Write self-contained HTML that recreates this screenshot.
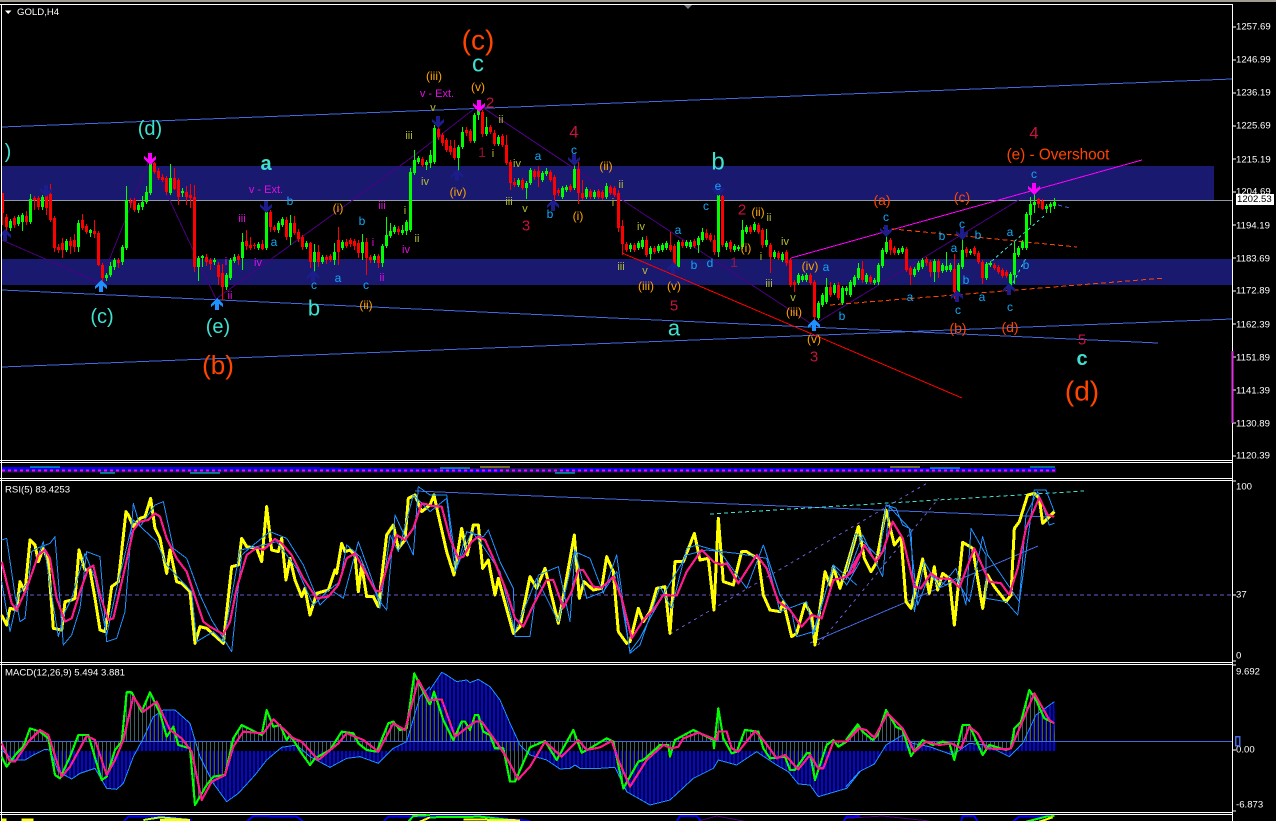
<!DOCTYPE html>
<html><head><meta charset="utf-8"><title>GOLD,H4</title>
<style>
html,body{margin:0;padding:0;background:#000;width:1276px;height:821px;overflow:hidden}
svg{display:block;position:absolute;left:0;top:0}
text{font-family:"Liberation Sans",Arial,sans-serif;dominant-baseline:central}
.m text{text-anchor:middle}
.ax text{fill:#fff;font-size:9.600px}
polyline{fill:none;stroke-linejoin:round}
.y{stroke:#ff0;stroke-width:9}
.p{stroke:#ff1a8c;stroke-width:6.5}
.b{stroke:#1e90ff;stroke-width:3}
.g{stroke:#0f0;stroke-width:6.5}
</style></head><body>
<svg width="1276" height="821" viewBox="0 0 1276 821" xmlns="http://www.w3.org/2000/svg">
<defs>
<pattern id="pb" width="4" height="10" patternUnits="userSpaceOnUse"><rect x="1" width="2" height="10" fill="#0000ff"/></pattern>
<pattern id="pg" width="4" height="10" patternUnits="userSpaceOnUse"><rect x="2" width="1" height="10" fill="#3f5f61"/></pattern>
<path id="dn" d="M-2-12H2V-6L6-9V-6L0 0-6-6V-9L-2-6Z"/>
<path id="up" d="M-2 12H2V6L6 9V6L0 0-6 6V9L-2 6Z"/>
<clipPath id="cb">
<polygon transform="scale(.33333) translate(0,1980)" points="5,273 5,270 40,300 75,300 100,285 135,268 150,270 175,335 215,357 240,340 285,325 320,385 350,388 370,370 400,290 430,235 460,170 490,150 525,150 570,190 600,290 640,370 680,425 715,400 765,345 800,300 845,262 890,255 930,290 990,322 1040,295 1080,290 1135,310 1180,265 1220,245 1260,110 1290,80 1290,273"/>
<polygon transform="translate(430,660) scale(.33333)" points="0,273 0,90 35,37 50,45 80,65 110,60 120,68 145,58 180,80 210,120 240,190 270,255 300,285 350,300 390,327 420,325 435,315 450,325 510,325 555,322 590,395 660,435 720,420 790,355 850,325 865,300 920,315 980,275 1040,315 1075,335 1105,372 1140,375 1165,410 1250,385 1290,335 1290,273"/>
<polygon transform="translate(846,660) scale(.33333)" points="0,273 0,380 40,335 85,312 120,255 170,225 200,250 250,260 320,285 370,250 420,255 490,290 530,250 570,165 625,125 628,273"/>
</clipPath>
<clipPath id="cg">
<polygon transform="scale(.33333) translate(0,1980)" points="5,244 5,290 20,320 50,280 70,260 90,205 120,215 145,235 165,345 180,355 210,290 235,225 265,225 290,310 305,360 320,350 345,270 365,245 380,97 395,97 425,155 450,97 480,160 500,230 520,200 535,255 570,265 585,435 620,375 640,350 675,345 700,235 725,195 745,205 785,225 800,150 820,200 840,195 860,240 870,225 905,280 930,315 945,295 990,270 1025,215 1060,220 1075,250 1100,270 1130,275 1165,190 1180,185 1200,210 1220,205 1243,40 1260,75 1290,135 1290,244"/>
<polygon transform="translate(430,660) scale(.33333)" points="0,244 0,135 12,95 40,180 70,240 95,185 105,185 120,210 135,165 145,165 160,215 180,225 195,265 220,265 240,365 255,365 300,262 345,243 380,300 430,210 455,278 480,265 530,235 550,245 580,385 625,305 640,300 690,255 715,255 720,290 735,240 790,210 850,240 852,265 865,145 880,235 905,280 920,275 945,210 985,215 1000,265 1020,295 1065,290 1080,330 1095,330 1130,280 1140,280 1155,360 1190,255 1210,240 1225,260 1250,245 1285,195 1290,244"/>
<polygon transform="translate(846,660) scale(.33333)" points="0,244 0,240 35,193 50,215 80,240 95,225 120,150 150,200 170,210 195,288 230,240 260,255 290,245 310,250 325,300 350,195 370,195 410,285 430,255 480,270 495,265 505,205 525,185 550,90 570,120 595,175 625,190 628,244"/>
</clipPath>
</defs>

<rect width="1276" height="821" fill="#000"/>
<rect width="1276" height="2" fill="#a09c90"/>

<!-- main panel bands -->
<g shape-rendering="crispEdges">
<rect x="2" y="166" width="1212" height="34" fill="#191970"/>
<rect x="2" y="259" width="1230" height="26" fill="#191970"/>
<rect x="2" y="200" width="1230" height="1" fill="#8f99a3"/>
</g>

<!-- channels -->
<g fill="none" shape-rendering="crispEdges">
<path d="M2 127 1232 79M2 290 1158 343M2 367 1232 319" stroke="#4169e1" stroke-width="1"/>
<path d="M2 240 100 283 150 158 216 299 415 155 479 105 575 169 813 325 1022 198" stroke="#4b0082"/>
<path d="M791 258 1142 160" stroke="#ff00ff"/>
<path d="M622 253 962 398" stroke="#ff0000"/>
<path d="M830 305 1165 278M883 228 1077 247" stroke="#ff4500" stroke-dasharray="5 3"/>
<path d="M987 265 1044 216M1013 283 1026 258" stroke="#40e0d0" stroke-dasharray="3 3"/>
<path d="M1058 205 1070 208" stroke="#4169e1" stroke-dasharray="4 3"/>
</g>

<!-- candles -->
<g transform="translate(.5,0)" fill="none" shape-rendering="crispEdges">
<path stroke="#ff0000" d="M2 193V225M6 214V236M14 216V228M26 211V225M34 196V210M38 196V210M46 188V215M50 184V222M54 216V252M58 244V253M62 238V258M70 237V254M74 234V252M82 214V230M86 224V234M94 220V238M98 231V266M102 263V284M118 258V268M130 198V208M134 198V212M154 162V174M158 168V180M162 174V182M166 176V195M174 168V190M178 178V205M186 186V205M190 184V208M194 185V272M206 254V266M210 258V270M218 262V285M222 264V300M238 254V265M246 230V250M250 237V250M254 243V249M262 240V250M270 210V232M274 225V232M286 217V240M294 216V235M298 229V242M302 235V250M310 242V268M318 245V267M326 255V264M330 254V262M338 227V265M346 239V248M350 238V247M354 239V250M358 240V258M366 238V275M370 255V263M378 254V268M398 226V235M422 157V167M438 125V140M442 133V146M446 138V152M450 140V155M454 140V160M466 127V136M470 129V143M482 110V137M490 125V134M494 130V146M502 134V147M506 135V165M510 160V190M514 178V187M522 178V190M534 169V180M538 166V187M550 170V182M554 175V203M558 188V196M570 184V192M578 162V204M582 180V200M590 189V199M598 189V199M602 190V200M610 185V195M614 186V197M618 190V232M622 220V255M626 242V252M634 243V252M646 236V257M654 246V254M670 232V252M674 244V270M682 240V248M694 239V248M706 229V240M710 233V242M714 235V255M722 195V247M730 240V252M750 225V234M758 223V234M762 228V248M770 243V273M778 251V260M786 250V266M790 258V287M794 280V292M810 273V285M814 280V323M830 282V297M838 282V300M862 261V283M870 275V284M890 238V255M894 246V255M906 247V272M910 266V285M926 257V266M930 260V277M938 259V278M954 254V299M966 247V257M974 246V256M978 251V264M982 260V284M994 263V270M998 265V274M1002 268V278M1006 270V278M1038 198V208M1042 199V210"/>
<path stroke="#ff0000" stroke-width="3" d="M2 193V213M6 217V227M14 218V225M26 216V222M34 198V200M38 198V207M46 193V208M50 194V220M54 218V248M58 247V250M62 243V250M70 241V246M74 240V247M82 220V228M86 226V232M94 231V234M98 233V265M102 265V278M118 260V263M130 201V203M134 200V210M154 163V172M158 171V178M162 177V180M166 178V192M174 178V189M178 180V197M186 192V197M190 195V198M194 197V267M206 257V262M210 260V264M218 265V277M222 273V287M238 256V260M246 241V246M250 245V248M254 245V246M262 244V249M270 212V227M274 227V230M286 220V237M294 223V233M298 232V239M302 237V247M310 243V262M318 252V262M326 257V260M330 256V260M338 240V252M346 242V246M350 240V244M354 241V246M358 243V253M366 242V258M370 257V260M378 256V263M398 229V232M422 159V165M438 129V137M442 135V143M446 140V150M450 146V152M454 148V158M466 130V133M470 131V141M482 112V134M490 127V132M494 133V144M502 136V145M506 145V163M510 162V183M514 182V185M522 180V188M534 171V177M538 171V177M550 172V180M554 177V195M558 190V193M570 186V190M578 169V193M582 193V198M590 191V197M598 191V197M602 192V198M610 187V193M614 188V195M618 193V228M622 226V244M626 244V250M634 245V250M646 240V255M654 248V252M670 245V250M674 246V267M682 242V246M694 241V246M706 233V238M710 235V240M714 240V252M722 196V245M730 242V249M750 227V232M758 225V232M762 230V245M770 245V257M778 253V258M786 252V263M790 260V285M794 282V285M810 275V283M814 282V317M830 287V295M838 285V298M862 269V280M870 277V282M890 240V250M894 248V253M906 249V270M910 268V275M926 259V263M930 262V272M938 261V272M954 269V292M966 249V253M974 248V254M978 253V262M982 262V278M994 265V268M998 267V272M1002 270V276M1006 272V276M1038 199V204M1042 201V209"/>
<path stroke="#00ff00" d="M10 219V231M18 215V226M22 213V231M30 194V224M42 195V210M66 239V252M78 220V252M90 229V237M106 273V281M110 262V277M114 258V270M122 245V265M126 186V250M138 203V213M142 196V210M146 186V204M150 155V195M170 164V195M182 188V197M198 256V281M202 255V267M214 258V265M226 273V290M230 258V280M234 254V263M242 233V270M258 242V250M266 205V250M278 221V233M282 217V227M290 215V245M306 241V249M314 244V275M322 255V264M334 243V265M342 240V250M362 234V260M374 254V263M382 244V267M386 217V248M390 223V238M394 225V234M402 225V235M406 220V235M410 168V232M414 150V175M418 156V164M426 160V170M430 150V168M434 125V164M458 145V172M462 127V149M474 113V143M478 106V120M486 117V136M498 135V146M518 178V187M526 181V199M530 168V185M542 171V182M546 168V176M562 186V199M566 185V192M574 160V190M586 187V199M594 190V199M606 183V199M630 243V252M638 241V250M642 237V249M650 246V260M658 244V253M662 243V252M666 241V250M678 240V270M686 240V248M690 240V249M698 236V253M702 228V242M718 193V257M726 241V250M734 244V252M738 245V251M742 220V249M746 225V234M754 222V232M766 229V247M774 250V259M782 252V262M798 273V285M802 274V282M806 273V282M818 301V320M822 293V307M826 278V304M834 283V295M842 286V305M846 286V295M850 280V297M854 275V287M858 263V280M866 273V284M874 278V285M878 263V285M882 248V268M886 233V254M898 248V255M902 246V254M914 267V277M918 261V272M922 258V269M934 259V282M942 263V273M946 252V272M950 263V272M958 263V294M962 237V269M970 249V255M986 262V280M990 261V267M1010 272V288M1014 242V284M1018 246V257M1022 240V250M1026 212V250M1030 197V225M1034 190V213M1046 204V213M1050 202V213M1054 198V209"/>
<path stroke="#00ff00" stroke-width="3" d="M10 221V228M18 217V224M22 215V222M30 199V222M42 197V207M66 241V250M78 223V247M90 230V233M106 275V278M110 266V275M114 260V267M122 247V262M126 200V248M138 205V210M142 202V207M146 192V202M150 162V193M170 178V193M182 191V193M198 258V267M202 256V258M214 260V262M226 275V287M230 260V278M234 257V261M242 242V258M258 244V248M266 212V248M278 223V230M282 219V225M290 223V237M306 243V247M314 252V262M322 257V262M334 252V260M342 242V248M362 242V253M374 256V260M382 246V263M386 235V246M390 231V236M394 227V232M402 230V233M406 222V231M410 172V230M414 160V173M418 158V162M426 162V165M430 155V163M434 128V162M458 147V158M462 132V147M474 115V141M478 108V115M486 127V134M498 137V144M518 180V185M526 183V188M530 170V183M542 173V180M546 171V174M562 188V197M566 187V190M574 169V188M586 189V197M594 192V197M606 186V197M630 245V249M638 243V248M642 240V247M650 248V254M658 246V251M662 245V250M666 243V248M678 242V267M686 242V246M690 242V247M698 238V245M702 232V240M718 195V252M726 243V247M734 246V250M738 247V249M742 230V247M746 227V232M754 224V230M766 240V245M774 252V257M782 254V260M798 275V283M802 276V280M806 275V280M818 303V318M822 295V305M826 287V302M834 285V293M842 288V303M846 288V291M850 282V295M854 277V285M858 268V278M866 275V282M874 280V283M878 265V282M882 250V266M886 242V252M898 250V253M902 248V252M914 269V275M918 263V270M922 260V267M934 261V272M942 265V271M946 266V270M950 265V270M958 265V292M962 250V267M970 251V253M986 264V278M990 263V265M1010 274V287M1014 253V275M1018 248V255M1022 242V248M1026 214V248M1030 204V215M1034 202V205M1046 206V209M1050 204V207M1054 202V206"/>
</g>

<!-- arrows -->
<g shape-rendering="crispEdges">
<g fill="#1c1c8a">
<use href="#dn" x="46" y="197"/><use href="#up" x="5" y="229"/><use href="#dn" x="266" y="213"/><use href="#up" x="313" y="270"/>
<use href="#dn" x="438" y="128"/><use href="#up" x="457" y="169"/><use href="#dn" x="574" y="166"/>
<use href="#up" x="553" y="199"/><use href="#up" x="673" y="262"/><use href="#dn" x="718" y="196"/><use href="#dn" x="886" y="237"/>
<use href="#dn" x="962" y="240"/><use href="#up" x="957" y="290"/><use href="#up" x="1009" y="283"/>
</g>
<g fill="#ff00ff"><use href="#dn" x="150" y="165"/><use href="#dn" x="479" y="112"/><use href="#dn" x="1034" y="195"/></g>
<g fill="#1e90ff"><use href="#up" x="101" y="280"/><use href="#up" x="217" y="298"/><use href="#up" x="814" y="319"/></g>
</g>

<!-- labels -->
<g class="m">
<g fill="#ff4500">
<text x="478" y="40" font-size="28">(c)</text>
<text x="218" y="365" font-size="26">(b)</text>
<text x="1082" y="391" font-size="28">(d)</text>
<text x="1058" y="155" font-size="15.300">(e) - Overshoot</text>
<text x="882" y="200" font-size="14">(a)</text>
<text x="962" y="197" font-size="14">(c)</text>
<text x="958" y="328" font-size="14">(b)</text>
<text x="1010" y="327" font-size="14">(d)</text>
</g>
<g fill="#40e0d0">
<text x="150" y="129" font-size="20">(d)</text>
<text x="8" y="152" font-size="20">)</text>
<text x="102" y="317" font-size="20">(c)</text>
<text x="218" y="327" font-size="20">(e)</text>
<text x="266" y="164" font-size="20" font-weight="bold">a</text>
<text x="314" y="308" font-size="22">b</text>
<text x="478" y="64" font-size="24">c</text>
<text x="718" y="162" font-size="24">b</text>
<text x="674" y="328" font-size="22">a</text>
<text x="1082" y="359" font-size="20" font-weight="bold">c</text>
</g>
<g fill="#c8143c">
<text x="490" y="103" font-size="15">2</text><text x="574" y="132" font-size="17">4</text><text x="482" y="152" font-size="14" opacity=".75">1</text>
<text x="526" y="226" font-size="15">3</text><text x="742" y="210" font-size="15">2</text><text x="734" y="262" font-size="14" opacity=".75">1</text>
<text x="674" y="306" font-size="15">5</text><text x="814" y="357" font-size="15">3</text><text x="1034" y="133" font-size="17">4</text>
<text x="1082" y="340" font-size="15">5</text>
</g>
<g fill="#ffa500" font-size="12">
<text x="338" y="208">(i)</text><text x="366" y="305">(ii)</text><text x="434" y="76">(iii)</text><text x="478" y="87">(v)</text>
<text x="458" y="192">(iv)</text><text x="606" y="166">(ii)</text><text x="578" y="216">(i)</text><text x="758" y="212">(ii)</text>
<text x="746" y="248">(i)</text><text x="810" y="266">(iv)</text><text x="646" y="286">(iii)</text><text x="674" y="286">(v)</text>
<text x="794" y="312">(iii)</text><text x="814" y="339">(v)</text>
</g>
<g fill="#b5bd33" font-size="11">
<text x="405" y="211">i</text><text x="409" y="136">iii</text><text x="417" y="239">ii</text><text x="433" y="108">v</text>
<text x="501" y="120">ii</text><text x="493" y="154">i</text><text x="517" y="164">iv</text><text x="425" y="182">iv</text>
<text x="621" y="185">ii</text><text x="509" y="202">iii</text><text x="525" y="209">v</text><text x="613" y="203">i</text>
<text x="769" y="218">ii</text><text x="641" y="227">iv</text><text x="785" y="242">iv</text><text x="761" y="257">i</text>
<text x="621" y="267">iii</text><text x="645" y="271">v</text><text x="769" y="284">iii</text><text x="793" y="298">v</text>
</g>
<g fill="#e010e0" font-size="11">
<text x="266" y="190">v - Ext.</text><text x="437" y="94">v - Ext.</text>
<text x="382" y="206">iii</text><text x="242" y="219">iii</text><text x="373" y="243">i</text><text x="406" y="250">iv</text>
<text x="258" y="263">iv</text><text x="382" y="278">ii</text><text x="226" y="262">i</text><text x="230" y="296">ii</text>
</g>
<g fill="#10a8f5" font-size="12">
<text x="290" y="201">b</text><text x="362" y="221">b</text><text x="274" y="242">a</text><text x="338" y="278">a</text>
<text x="314" y="285">c</text><text x="366" y="285">c</text><text x="574" y="150">c</text><text x="538" y="156">a</text>
<text x="718" y="186">e</text><text x="550" y="214">b</text><text x="706" y="206">c</text><text x="678" y="230">a</text>
<text x="694" y="265">b</text><text x="710" y="263">d</text><text x="826" y="267">a</text><text x="1034" y="174">c</text>
<text x="886" y="217">c</text><text x="962" y="224">c</text><text x="942" y="236">b</text><text x="978" y="235">b</text>
<text x="954" y="248">a</text><text x="1010" y="232">a</text><text x="1026" y="265">b</text><text x="966" y="280">b</text>
<text x="910" y="297">a</text><text x="982" y="297">a</text><text x="958" y="310">c</text><text x="1010" y="307">c</text>
<text x="842" y="316">b</text>
</g>
</g>

<!-- frames -->
<g fill="#fff" shape-rendering="crispEdges">
<rect y="4" width="1233" height="1"/>
<rect x="1" y="4" width="1" height="817"/>
<rect x="1232" y="4" width="1" height="817"/>
<rect y="460" width="1233" height="1"/><rect y="462" width="1233" height="1"/>
<rect y="478" width="1233" height="1"/><rect y="480" width="1233" height="1"/>
<rect y="662" width="1233" height="1"/><rect y="664" width="1233" height="1"/>
<rect y="812" width="1233" height="1"/><rect y="814" width="1233" height="1"/>
</g>
<path d="M684 5H692L688 9Z" fill="#777"/>
<path d="M5 10.500H11.500L8.200 14Z" fill="#fff"/>
<text x="17" y="12.500" fill="#fff" font-size="9.600">GOLD,H4</text>

<!-- price axis -->
<g class="ax">
<text x="1236" y="27">1257.69</text><text x="1236" y="60">1246.99</text><text x="1236" y="93">1236.19</text><text x="1236" y="126">1225.69</text>
<text x="1236" y="160">1215.19</text><text x="1236" y="192">1204.69</text><text x="1236" y="226">1194.19</text><text x="1236" y="259">1183.69</text>
<text x="1236" y="291">1172.89</text><text x="1236" y="325">1162.39</text><text x="1236" y="358">1151.89</text><text x="1236" y="391">1141.39</text>
<text x="1236" y="424">1130.89</text><text x="1236" y="456">1120.39</text>
<text x="1236" y="487">100</text><text x="1236" y="595">37</text><text x="1236" y="656">0</text>
<text x="1236" y="672">9.692</text><text x="1236" y="750">0.00</text><text x="1236" y="805">-6.873</text>
</g>
<path shape-rendering="crispEdges" stroke="#fff" d="M1233 27h3M1233 60h3M1233 93h3M1233 126h3M1233 159h3M1233 192h3M1233 225h3M1233 258h3M1233 291h3M1233 324h3M1233 357h3M1233 390h3M1233 423h3M1233 456h3M1233 481h3M1233 595h3M1233 661h3M1233 665h3M1233 750h3M1233 811h3"/>
<rect x="1236" y="194" width="38" height="11" fill="#fff"/>
<text x="1237" y="199.500" fill="#000" font-size="9.600">1202.53</text>
<rect x="1231.500" y="351" width="2" height="72" fill="#e030e0"/>

<!-- mini panel -->
<g fill="none" shape-rendering="crispEdges">
<rect x="2" y="468" width="1054" height="4.500" fill="#16166e"/>
<path d="M2 468H300L340 469 500 471M560 469H1055" stroke="#0000ff" stroke-width="2.500"/>
<path d="M2 470.500H1056" stroke="#ff00ff" stroke-width="2" stroke-dasharray="3 3"/>
<path d="M30 467H60M100 473H115M190 473H220M440 468H470M555 473H575M930 468H960M1030 467H1055" stroke="#00e5ee" stroke-width="1"/>
<path d="M480 467H510M890 467H920" stroke="#e8e040" stroke-width="1"/>
</g>

<!-- RSI -->
<text x="5" y="490" fill="#fff" font-size="9.600">RSI(5) 83.4253</text>
<g fill="none" shape-rendering="crispEdges">
<path d="M2 595H1232" stroke="#6a5acd" stroke-dasharray="4 3"/>
<path d="M415 491 1050 517M810 643 1038 546" stroke="#4169e1"/>
<path d="M710 514 1084 491" stroke="#40e0d0" stroke-dasharray="4 3"/>
<path d="M670 634 929 482M818 645 939 498" stroke="#6a5acd" stroke-dasharray="3 4"/>
</g>
<g shape-rendering="crispEdges">
<g transform="translate(0,455) scale(.33333)">
<polyline class="y" points="5,480 20,510 30,460 50,465 60,380 75,410 90,255 105,270 115,320 130,280 145,320 160,520 185,525 195,440 215,435 225,430 237,285 255,345 270,345 285,430 300,525 315,530 325,470 335,395 355,380 378,170 385,180 400,215 420,190 435,185 452,130 465,220 480,250 500,355 510,285 530,380 545,385 555,395 570,410 585,565 600,515 620,520 670,565 695,335 715,330 725,250 740,275 770,280 785,320 800,155 815,285 835,290 845,250 858,375 870,310 885,375 905,425 915,400 930,480 950,415 985,405 1005,345 1010,355 1025,265 1035,290 1050,285 1065,300 1075,410 1085,330 1100,425 1120,425 1135,455 1160,240 1180,210 1195,280 1215,255 1225,130 1245,120 1265,170 1290,150"/>
<polyline class="b" points="5,255 20,250 45,420 60,500 75,490 95,290 110,280 150,265 165,245 190,570 215,540 240,460 260,290 300,305 320,560 350,550 375,470 400,145 420,215 465,150 490,140 520,280 560,310 600,420 635,495 695,590 725,300 760,270 810,230 860,250 910,330 960,450 1000,410 1030,430 1075,260 1140,440 1160,465 1185,180 1240,300 1255,95 1290,120"/>
<polyline class="b" points="5,380 30,530 55,420 85,380 130,260 175,545 195,470 215,430 255,295 285,370 320,540 350,400 400,195 470,260 500,330 575,410 590,560 640,530 670,560 720,285 770,275 830,260 890,340 940,450 980,410 1020,380 1040,270 1080,305 1130,420 1140,460 1170,240 1195,290 1240,120 1290,170"/>
<polyline class="p" points="5,320 35,445 50,465 80,400 115,300 135,285 150,310 170,430 195,500 215,490 240,410 265,340 280,332 300,420 325,495 340,490 370,360 400,225 420,200 445,195 465,175 480,185 500,250 530,310 560,350 590,440 610,500 630,515 670,538 690,500 710,400 740,300 770,278 790,285 825,252 845,265 875,300 910,370 950,430 985,425 1015,390 1040,310 1065,295 1090,340 1125,405 1140,410 1165,320 1190,240 1215,255 1240,220 1265,145 1290,150"/>
</g>
<g transform="translate(430,455) scale(.33333)">
<polyline class="y" points="0,150 12,120 25,180 50,290 72,360 95,220 112,300 130,210 145,210 158,340 175,315 195,420 205,370 250,535 270,515 300,365 320,400 345,340 385,505 415,340 433,240 448,430 462,380 490,405 515,400 530,305 550,350 565,530 590,565 600,560 625,460 640,500 660,470 680,400 705,395 720,535 735,320 760,320 793,235 810,315 835,310 852,465 865,190 880,380 910,390 935,290 950,290 965,300 985,310 1000,420 1020,465 1050,470 1060,440 1085,545 1100,535 1125,445 1145,480 1155,570 1185,350 1200,390 1210,335 1230,400 1245,350 1285,215"/>
<polyline class="b" points="0,120 50,120 80,340 110,230 160,245 175,225 210,320 250,400 255,545 300,545 325,360 385,335 420,500 435,290 480,310 520,415 560,300 600,595 630,570 690,395 725,460 770,280 800,270 870,290 950,400 1000,270 1050,420 1085,470 1100,545 1150,530 1210,335 1250,390 1290,320"/>
<polyline class="b" points="0,170 50,130 75,350 125,230 150,260 210,350 255,530 320,370 385,500 435,285 470,430 520,410 560,350 600,590 630,550 660,490 720,385 770,300 830,285 920,295 1010,310 1050,470 1130,440 1150,540 1210,330 1280,390"/>
<polyline class="p" points="0,152 35,155 60,250 85,310 100,305 125,260 145,245 165,255 190,310 230,410 255,490 280,515 310,450 350,375 370,375 400,458 425,410 445,345 460,345 490,395 515,398 550,365 575,430 605,550 640,495 670,465 700,420 740,422 770,350 815,285 850,320 875,330 890,325 925,385 980,300 1010,340 1045,440 1080,465 1115,515 1145,480 1175,490 1210,375 1250,365 1290,295"/>
</g>
<g transform="translate(846,455) scale(.33333)">
<polyline class="y" points="0,350 38,215 55,310 75,350 90,325 120,165 145,270 165,245 180,440 195,460 230,312 250,415 265,335 275,405 290,355 310,370 325,510 350,262 380,280 410,460 425,360 445,395 480,440 495,420 505,220 520,200 545,120 565,115 580,130 590,205 625,170"/>
<polyline class="b" points="0,375 50,240 110,365 130,155 195,225 205,470 235,320 280,400 330,340 360,450 375,220 420,300 420,430 480,440 515,480 565,105 600,105 625,170"/>
<polyline class="b" points="0,350 30,235 100,310 120,150 150,160 170,210 190,220 215,450 250,360 300,390 330,370 370,440 410,245 425,300 520,440 540,180 575,110 610,210 625,205"/>
<polyline class="p" points="0,365 20,350 55,270 90,320 110,290 140,200 170,250 205,395 225,400 255,355 275,370 315,372 340,398 385,280 430,380 465,385 490,420 515,340 540,220 580,128 605,180 625,185"/>
</g>
</g>

<!-- MACD -->
<text x="5" y="673" fill="#fff" font-size="9.600">MACD(12,26,9) 5.494 3.881</text>
<g shape-rendering="crispEdges">
<rect x="0" y="665" width="1060" height="147" fill="url(#pb)" clip-path="url(#cb)"/>
<rect x="0" y="665" width="1060" height="147" fill="url(#pg)" clip-path="url(#cg)"/>
<rect x="2" y="741" width="1230" height="1" fill="#4169e1"/>
<g transform="translate(0,660) scale(.33333)">
<polyline class="b" points="5,270 40,300 75,300 100,285 135,268 150,270 175,335 215,357 240,340 285,325 320,385 350,388 370,370 400,290 430,235 460,170 490,150 525,150 570,190 600,290 640,370 680,425 715,400 765,345 800,300 845,262 890,255 930,290 990,322 1040,295 1080,290 1135,310 1180,265 1220,245 1260,110 1290,80"/>
<polyline class="g" points="5,290 20,320 50,280 70,260 90,205 120,215 145,235 165,345 180,355 210,290 235,225 265,225 290,310 305,360 320,350 345,270 365,245 380,97 395,97 425,155 450,97 480,160 500,230 520,200 535,255 570,265 585,435 620,375 640,350 675,345 700,235 725,195 745,205 785,225 800,150 820,200 840,195 860,240 870,225 905,280 930,315 945,295 990,270 1025,215 1060,220 1075,250 1100,270 1130,275 1165,190 1180,185 1200,210 1220,205 1243,40 1260,75 1290,135"/>
<polyline class="p" points="5,250 30,305 45,305 85,245 120,210 145,225 185,350 210,320 260,228 285,240 320,345 345,300 370,240 400,110 430,155 470,125 510,210 545,235 575,275 605,420 635,365 675,345 700,260 730,215 790,220 820,178 880,235 905,245 955,300 1015,250 1040,220 1090,240 1135,275 1180,190 1215,210 1255,60 1290,125"/>
</g>
<g transform="translate(430,660) scale(.33333)">
<polyline class="b" points="0,90 35,37 50,45 80,65 110,60 120,68 145,58 180,80 210,120 240,190 270,255 300,285 350,300 390,327 420,325 435,315 450,325 510,325 555,322 590,395 660,435 720,420 790,355 850,325 865,300 920,315 980,275 1040,315 1075,335 1105,372 1140,375 1165,410 1250,385 1290,335"/>
<polyline class="g" points="0,135 12,95 40,180 70,240 95,185 105,185 120,210 135,165 145,165 160,215 180,225 195,265 220,265 240,365 255,365 300,262 345,243 380,300 430,210 455,278 480,265 530,235 550,245 580,385 625,305 640,300 690,255 715,255 720,290 735,240 790,210 850,240 852,265 865,145 880,235 905,280 920,275 945,210 985,215 1000,265 1020,295 1065,290 1080,330 1095,330 1130,280 1140,280 1155,360 1190,255 1210,240 1225,260 1250,245 1285,195"/>
<polyline class="p" points="0,120 35,118 75,230 135,185 155,185 205,255 225,285 265,358 300,320 345,245 395,290 445,240 470,270 510,262 545,243 565,300 600,380 650,300 700,255 725,265 745,260 760,235 805,218 860,240 865,215 890,215 905,265 925,275 975,213 1000,240 1040,295 1065,285 1105,328 1140,285 1165,325 1180,325 1210,245 1250,245 1290,200"/>
</g>
<g transform="translate(846,660) scale(.33333)">
<polyline class="b" points="0,380 40,335 85,312 120,255 170,225 200,250 250,260 320,285 370,250 420,255 490,290 530,250 570,165 625,125"/>
<polyline class="g" points="0,240 35,193 50,215 80,240 95,225 120,150 150,200 170,210 195,288 230,240 260,255 290,245 310,250 325,300 350,195 370,195 410,285 430,255 480,270 495,265 505,205 525,185 550,90 570,120 595,175 625,190"/>
<polyline class="p" points="0,245 40,205 60,210 85,233 125,160 170,205 205,275 240,245 280,255 315,250 345,265 370,200 395,220 420,265 480,268 495,265 565,100 610,180 625,190"/>
</g>
</g>
<rect x="1235.500" y="736.500" width="4" height="9" fill="none" stroke="#4169e1" stroke-width="1.500" shape-rendering="crispEdges"/>

<!-- bottom strip -->
<text x="5" y="826" fill="#fff" font-size="9.600">Stoch(8,3,3) 66.1134 7845</text>
<text x="1236" y="826" fill="#fff" font-size="9.600">105</text>
<g transform="translate(0,660) scale(.33333)" fill="none" shape-rendering="crispEdges">
<path d="M370 485 385 470 480 468 575 480M740 485 760 468 890 470 910 485M1150 485 1165 470 1290 470" stroke="#0000ff" stroke-width="6"/>
<path d="M430 480 480 472 570 480" stroke="#adff2f" stroke-width="6"/>
<path d="M480 480H570" stroke="#ff0" stroke-width="6"/>
<path d="M1225 485 1240 468 1290 465" stroke="#0f0" stroke-width="6"/>
<path d="M1260 485 1290 472" stroke="#ff0" stroke-width="6"/>
<path d="M5 480H20M65 480H100" stroke="#ff0" stroke-width="9"/>
</g>
<g transform="translate(430,660) scale(.33333)" fill="none" shape-rendering="crispEdges">
<path d="M0 468 150 468 300 483M740 485 750 468 800 468 815 485M1240 485 1250 470 1290 468" stroke="#0000ff" stroke-width="6"/>
<path d="M0 472 150 470 240 480" stroke="#0f0" stroke-width="6"/>
<path d="M100 478 270 481" stroke="#ff0" stroke-width="6"/>
<path d="M800 485 860 468 950 485" stroke="#4b0082" stroke-width="3"/>
</g>
<g transform="translate(846,660) scale(.33333)" fill="none" shape-rendering="crispEdges">
<path d="M0 475 110 468 250 483" stroke="#4b0082" stroke-width="3"/>
<path d="M345 485 350 468 385 468 395 485M500 485 520 470 625 468" stroke="#0000ff" stroke-width="6"/>
<path d="M540 485 600 470 625 468" stroke="#0f0" stroke-width="6"/>
<path d="M580 485 620 472" stroke="#ff0" stroke-width="6"/>
</g>
</svg>
</body></html>
